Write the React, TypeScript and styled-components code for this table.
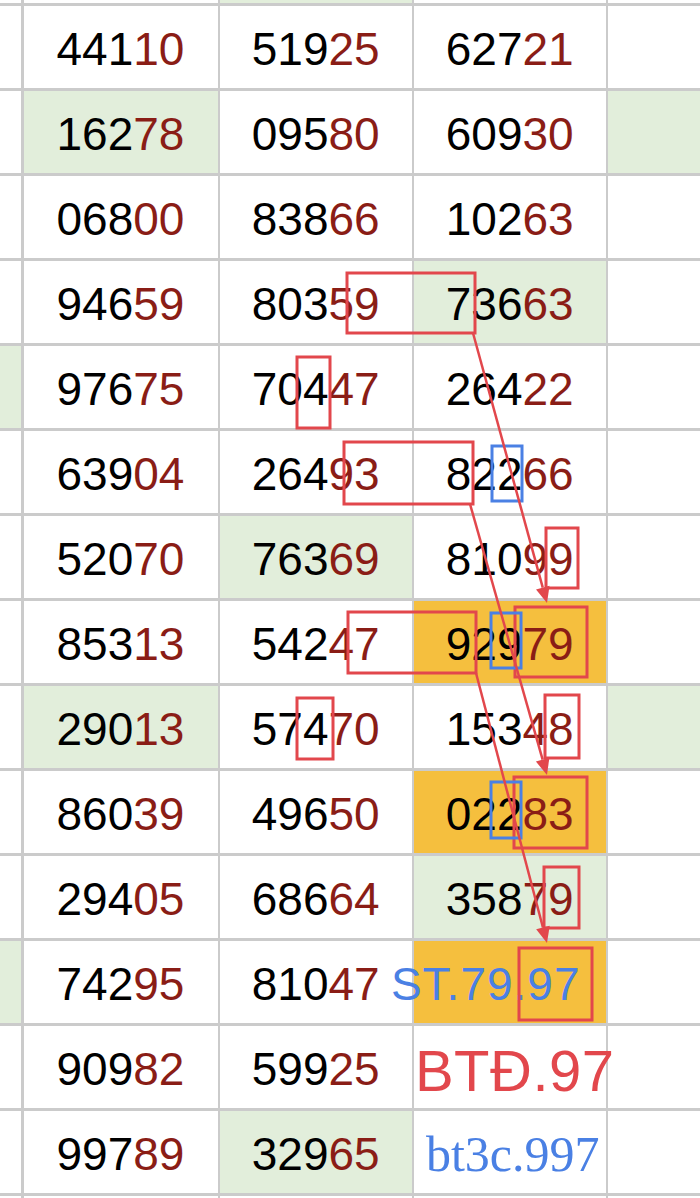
import React from 'react';
import styled, { createGlobalStyle } from 'styled-components';

type Fill = 'green' | 'orange';
type Note = 'st' | 'btd' | 'bt3c';

interface Entry {
  value?: string;
  fill?: Fill;
  note?: Note;
}

const e = (value?: string, fill?: Fill): Entry => ({ value, fill });
const blank: Entry = {};

const rows: Entry[][] = [
  [blank, blank, e(undefined, 'green'), blank, blank],
  [blank, e('44110'), e('51925'), e('62721'), blank],
  [blank, e('16278', 'green'), e('09580'), e('60930'), e(undefined, 'green')],
  [blank, e('06800'), e('83866'), e('10263'), blank],
  [blank, e('94659'), e('80359'), e('73663', 'green'), blank],
  [e(undefined, 'green'), e('97675'), e('70447'), e('26422'), blank],
  [blank, e('63904'), e('26493'), e('82266'), blank],
  [blank, e('52070'), e('76369', 'green'), e('81099'), blank],
  [blank, e('85313'), e('54247'), e('92979', 'orange'), blank],
  [blank, e('29013', 'green'), e('57470'), e('15348'), e(undefined, 'green')],
  [blank, e('86039'), e('49650'), e('02283', 'orange'), blank],
  [blank, e('29405'), e('68664'), e('35879', 'green'), blank],
  [e(undefined, 'green'), e('74295'), e('81047'), { value: 'ST.79.97', fill: 'orange', note: 'st' }, blank],
  [blank, e('90982'), e('59925'), { value: 'BTĐ.97', note: 'btd' }, blank],
  [blank, e('99789'), e('32965', 'green'), { value: 'bt3c.997', note: 'bt3c' }, blank],
  [blank, blank, blank, blank, blank],
];

// red boxes: x, y, w, h
const redBoxes = [
  [347, 273, 128, 60],
  [297, 357, 33, 71],
  [344, 442, 129, 62],
  [546, 528, 32, 60],
  [348, 612, 128, 61],
  [515, 607, 72, 70],
  [297, 698, 36, 61],
  [545, 695, 34, 63],
  [514, 777, 73, 71],
  [544, 867, 35, 61],
  [519, 948, 73, 72],
];

const blueBoxes = [
  [492, 446, 30, 55],
  [491, 613, 30, 55],
  [491, 782, 30, 56],
];

const arrows = [
  [473, 333, 547, 603],
  [470, 504, 547, 775],
  [476, 673, 547, 943],
];

const RED = '#e2474c';
const BLUE = '#4a80e4';

const GlobalStyle = createGlobalStyle`
  html, body {
    margin: 0;
    padding: 0;
    background: #ffffff;
    overflow: hidden;
  }
`;

const Page = styled.div`
  position: relative;
  width: 700px;
  height: 1198px;
  overflow: hidden;
  font-family: 'Liberation Sans', Arial, Helvetica, sans-serif;
`;

const Sheet = styled.div`
  display: grid;
  grid-template-columns: 21px 194px 191.5px 191.5px 1fr;
  grid-template-rows: 3.3px repeat(14, 82.5px) 1fr;
  gap: 2.5px;
  height: 1198px;
  background: #cbcbcb;
`;

const fills: Record<Fill, string> = {
  green: '#e2eedb',
  orange: '#f5bf3e',
};

const Cell = styled.div<{ $fill?: Fill; $note?: Note }>`
  display: flex;
  align-items: center;
  justify-content: ${(p) => (p.$note === 'st' ? 'flex-end' : 'center')};
  min-width: 0;
  padding-top: 3px;
  padding-right: ${(p) => (p.$note === 'st' ? '25px' : '0')};
  padding-left: ${(p) => (p.$note === 'btd' ? '10px' : p.$note === 'bt3c' ? '6px' : '0')};
  box-sizing: border-box;
  background: ${(p) => (p.$fill ? fills[p.$fill] : '#ffffff')};
  color: #000000;
  font-size: 46px;
  white-space: nowrap;
  overflow: visible;
  z-index: ${(p) => (p.$note ? 1 : 0)};
`;

const Tail = styled.span`
  color: #8a1d16;
`;

const StText = styled.span`
  color: ${BLUE};
  font-size: 46px;
  letter-spacing: 1px;
`;

const BtdText = styled.span`
  color: ${RED};
  font-size: 58px;
  letter-spacing: 0.5px;
  padding-top: 4px;
`;

const SerifText = styled.span`
  color: ${BLUE};
  font-family: 'Liberation Serif', 'DejaVu Serif', serif;
  font-size: 50px;
  font-variant-numeric: oldstyle-nums;
`;

const Marks = styled.svg`
  position: absolute;
  left: 0;
  top: 0;
  z-index: 2;
  pointer-events: none;
`;

const Arrow: React.FC<{ x1: number; y1: number; x2: number; y2: number }> = ({ x1, y1, x2, y2 }) => {
  const len = Math.hypot(x2 - x1, y2 - y1);
  const ux = (x2 - x1) / len;
  const uy = (y2 - y1) / len;
  const bx = x2 - ux * 16;
  const by = y2 - uy * 16;
  const nx = -uy * 7;
  const ny = ux * 7;
  return (
    <g>
      <line x1={x1} y1={y1} x2={bx} y2={by} stroke={RED} strokeWidth={2.5} />
      <polygon points={`${x2},${y2} ${bx + nx},${by + ny} ${bx - nx},${by - ny}`} fill={RED} />
    </g>
  );
};

const CellContent: React.FC<{ entry: Entry }> = ({ entry }) => {
  if (!entry.value) return null;
  if (entry.note === 'st') return <StText>{entry.value}</StText>;
  if (entry.note === 'btd') return <BtdText>{entry.value}</BtdText>;
  if (entry.note === 'bt3c') return <SerifText>{entry.value}</SerifText>;
  return (
    <>
      {entry.value.slice(0, 3)}
      <Tail>{entry.value.slice(3)}</Tail>
    </>
  );
};

export default function App() {
  return (
    <Page>
      <GlobalStyle />
      <Sheet>
        {rows.map((row, r) =>
          row.map((entry, c) => (
            <Cell key={`${r}-${c}`} $fill={entry.fill} $note={entry.note}>
              <CellContent entry={entry} />
            </Cell>
          ))
        )}
      </Sheet>
      <Marks width={700} height={1198} viewBox="0 0 700 1198">
        {redBoxes.map(([x, y, w, h], i) => (
          <rect key={`r${i}`} x={x} y={y} width={w} height={h} fill="none" stroke={RED} strokeWidth={3} />
        ))}
        {blueBoxes.map(([x, y, w, h], i) => (
          <rect key={`b${i}`} x={x} y={y} width={w} height={h} fill="none" stroke={BLUE} strokeWidth={3} />
        ))}
        {arrows.map(([x1, y1, x2, y2], i) => (
          <Arrow key={`a${i}`} x1={x1} y1={y1} x2={x2} y2={y2} />
        ))}
      </Marks>
    </Page>
  );
}
